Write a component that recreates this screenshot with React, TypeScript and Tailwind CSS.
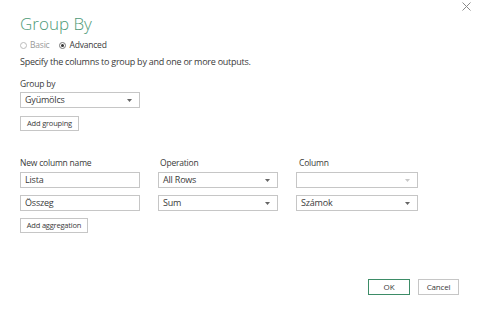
import React from "react";

const Caret = ({ light }: { light?: boolean }) => (
  <svg width="5" height="3" viewBox="0 0 5 3" className="shrink-0">
    <path d="M0 0 L5 0 L2.5 3 Z" fill={light ? "#c8c8c8" : "#666"} />
  </svg>
);

const Select = ({ value, w, light }: { value: string; w: string; light?: boolean }) => (
  <div className={`${w} h-[16px] border border-[#c6c6c6] bg-white flex items-center justify-between pl-[4px] pr-[7px] text-[9px] tracking-[-0.2px] text-[#3a3a3a]`}>
    <span>{value}</span>
    <Caret light={light} />
  </div>
);

const Input = ({ value }: { value: string }) => (
  <div className="w-[120px] h-[16px] border border-[#c6c6c6] bg-white flex items-center pl-[4px] text-[9px] tracking-[-0.2px] text-[#3a3a3a]">
    {value}
  </div>
);

const Btn = ({ label, w }: { label: string; w: string }) => (
  <div className={`${w} h-[15px] border border-[#c6c6c6] bg-white flex items-center justify-center text-[7.5px] tracking-[-0.2px] whitespace-nowrap text-[#3a3a3a]`}>
    {label}
  </div>
);

export default function App() {
  return (
    <div
      className="w-[480px] h-[314px] bg-white relative overflow-hidden"
      style={{ fontFamily: '"Open Sans", "Noto Sans", sans-serif' }}
    >
      <div className="absolute right-[9px] top-[2px] text-[#888]">
        <svg width="9" height="9" viewBox="0 0 9 9">
          <path d="M0.5 0.5 L8.5 8.5 M8.5 0.5 L0.5 8.5" stroke="#8a8a8a" strokeWidth="1" />
        </svg>
      </div>
      <div className="pl-[20px] pt-[13px] flex flex-col">
        <div className="text-[17px] leading-[22px] text-[#4e9a78] font-light">Group By</div>
        <div className="flex items-center gap-[10px] mt-[3px] h-[14px] text-[8.5px] tracking-[-0.2px]">
          <div className="flex items-center gap-[3px] text-[#999]">
            <span className="w-[7px] h-[7px] rounded-full border border-[#bbb]" />
            <span>Basic</span>
          </div>
          <div className="flex items-center gap-[3px] text-[#3a3a3a]">
            <span className="w-[7px] h-[7px] rounded-full border border-[#777] flex items-center justify-center">
              <span className="w-[3px] h-[3px] rounded-full bg-[#333]" />
            </span>
            <span>Advanced</span>
          </div>
        </div>
        <div className="text-[9px] tracking-[-0.25px] text-[#3a3a3a] mt-[3px] h-[14px] leading-[14px]">
          Specify the columns to group by and one or more outputs.
        </div>
        <div className="text-[8.5px] tracking-[-0.2px] text-[#3a3a3a] mt-[9px] h-[12px] leading-[12px]">Group by</div>
        <div className="mt-[2px]">
          <Select value="Gyümölcs" w="w-[120px]" />
        </div>
        <div className="mt-[8px]">
          <Btn label="Add grouping" w="w-[59px]" />
        </div>
        <div className="flex mt-[26px] text-[8.5px] tracking-[-0.2px] text-[#3a3a3a] h-[12px] leading-[12px]">
          <div className="w-[140px]">New column name</div>
          <div className="w-[139px]">Operation</div>
          <div>Column</div>
        </div>
        <div className="flex items-center mt-[3px]">
          <Input value="Lista" />
          <div className="ml-[18px]">
            <Select value="All Rows" w="w-[120px]" />
          </div>
          <div className="ml-[18px]">
            <Select value="" w="w-[122px]" light />
          </div>
        </div>
        <div className="flex items-center mt-[7px]">
          <Input value="Összeg" />
          <div className="ml-[18px]">
            <Select value="Sum" w="w-[120px]" />
          </div>
          <div className="ml-[18px]">
            <Select value="Számok" w="w-[122px]" />
          </div>
        </div>
        <div className="mt-[7px]">
          <Btn label="Add aggregation" w="w-[68px]" />
        </div>
      </div>
      <div className="absolute left-[368px] top-[279px] flex gap-[8px]">
        <div className="w-[42px] h-[16px] border border-[#3d8c67] bg-white flex items-center justify-center text-[8px] text-[#3a3a3a]">
          OK
        </div>
        <div className="w-[41px] h-[16px] border border-[#c6c6c6] bg-white flex items-center justify-center text-[8px] tracking-[-0.2px] text-[#3a3a3a]">
          Cancel
        </div>
      </div>
    </div>
  );
}
